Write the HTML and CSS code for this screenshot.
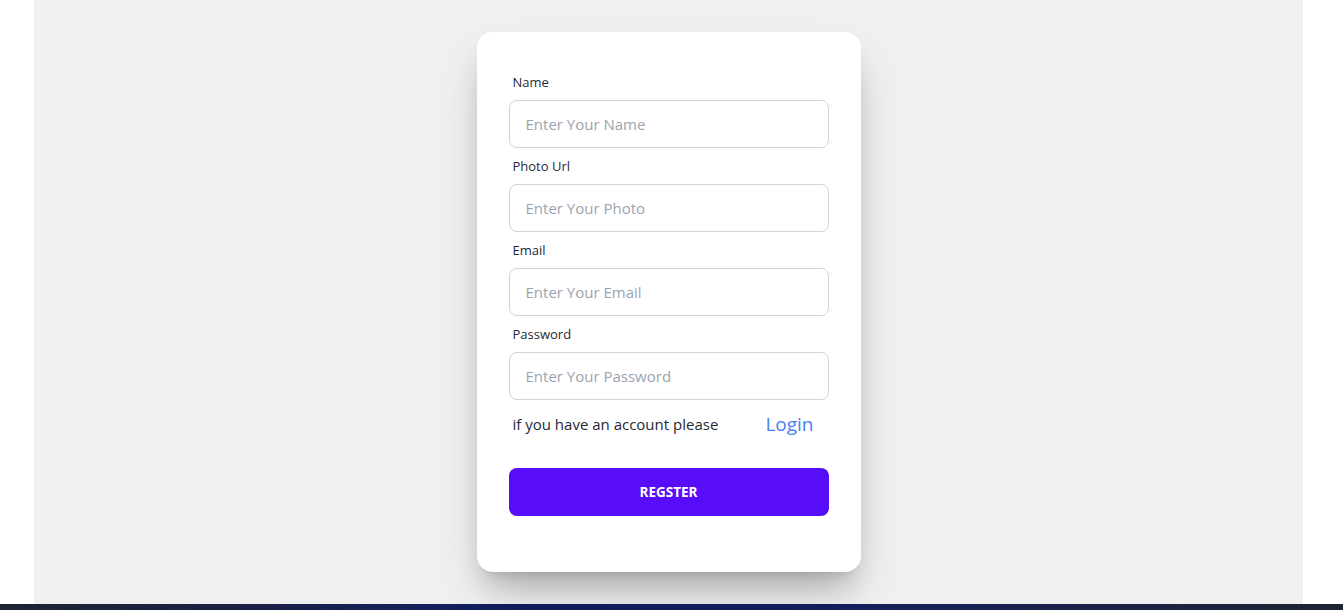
FILE: index.html
```html
<!DOCTYPE html>
<html>
<head>
<meta charset="utf-8">
<link rel="stylesheet" href="styles.css">
</head>
<body>
<main class="page">
  <section class="card">
    <form class="card-body">
      <div class="field">
        <label class="label">Name</label>
        <input class="input" type="text" placeholder="Enter Your Name">
      </div>
      <div class="field">
        <label class="label">Photo Url</label>
        <input class="input" type="text" placeholder="Enter Your Photo">
      </div>
      <div class="field">
        <label class="label">Email</label>
        <input class="input" type="email" placeholder="Enter Your Email">
      </div>
      <div class="field">
        <label class="label">Password</label>
        <input class="input" type="password" placeholder="Enter Your Password">
      </div>
      <div class="account">
        <span class="account-text">if you have an account please</span>
        <a class="login" href="#">Login</a>
      </div>
      <button class="btn" type="button">Regster</button>
    </form>
  </section>
</main>
<footer class="footer"></footer>
</body>
</html>
```
FILE: styles.css
```css
* { box-sizing: border-box; }
html, body { margin: 0; padding: 0; background: #fff; }
body {
  font-family: "Open Sans", "Noto Sans", sans-serif;
  color: #1f2937;
  height: 610px;
  overflow: hidden;
}
.page {
  margin: 0 40px 0 34px;
  background: #f0f0f0;
  height: 604px;
  padding-top: 32px;
  display: flex;
  justify-content: center;
  align-items: flex-start;
}
.card {
  width: 384px;
  background: #fff;
  border-radius: 16px;
  box-shadow: 0 20px 25px -5px rgba(0,0,0,0.1), 0 8px 10px -6px rgba(0,0,0,0.1), 0 25px 50px -12px rgba(0,0,0,0.25);
}
.card-body {
  display: flex;
  flex-direction: column;
  padding: 32px 32px 56px;
}
.field { display: flex; flex-direction: column; }
.label {
  padding: 8px 4px;
  font-size: 13px;
  line-height: 20px;
  color: #1f2937;
}
.input {
  height: 48px;
  width: 100%;
  border: 1px solid #d1d5db;
  border-radius: 8px;
  padding: 0 16px;
  font-family: inherit;
  font-size: 15px;
  color: #1f2937;
  background: #fff;
  outline: none;
}
.input::placeholder { color: #9ca3af; }
.account {
  display: flex;
  align-items: center;
  padding: 10px 4px 6px;
  height: 44px;
}
.account-text { font-size: 15px; color: #1f2937; }
.login {
  margin-left: auto;
  margin-right: 11px;
  font-size: 19px;
  color: #4b7ef0;
  text-decoration: none;
}
.btn {
  margin-top: 24px;
  height: 48px;
  width: 100%;
  border: none;
  border-radius: 8px;
  background: #570df8;
  color: #fff;
  font-family: inherit;
  font-weight: 700;
  font-size: 13.5px;
  text-transform: uppercase;
}
.footer {
  height: 6px;
  background: linear-gradient(90deg, #1d2330 0%, #1a2040 15%, #121f5e 35%, #13205f 60%, #1c2244 85%, #1d2330 100%);
}
```
